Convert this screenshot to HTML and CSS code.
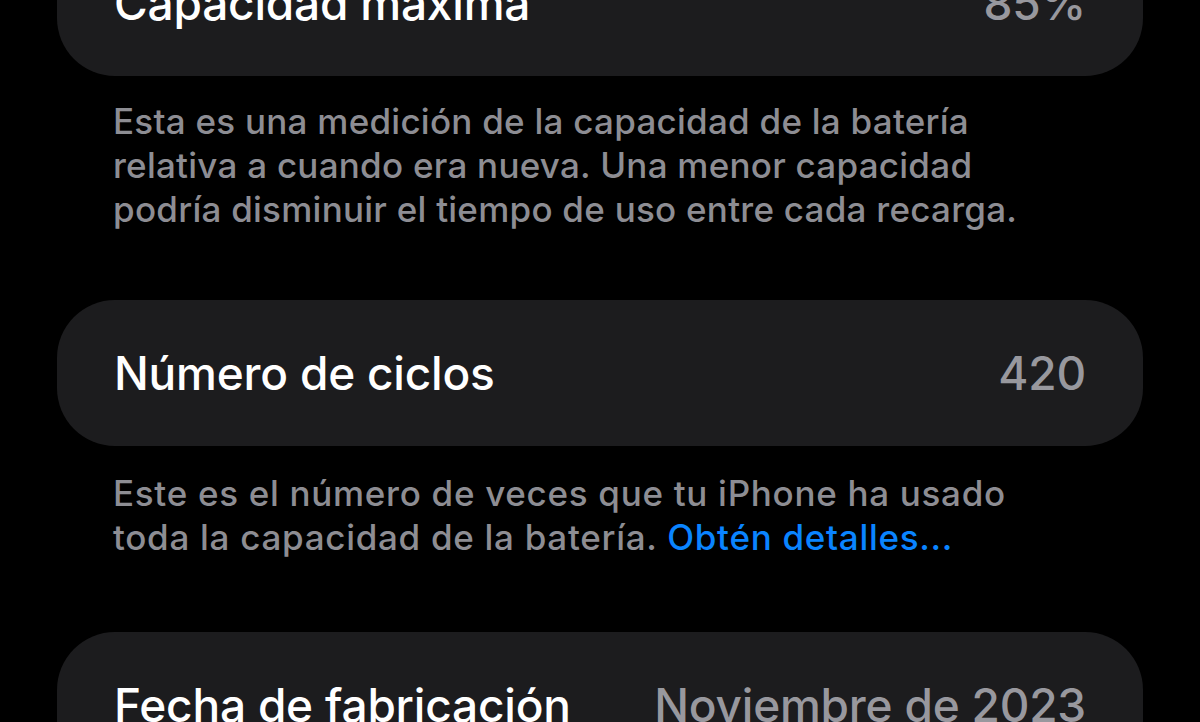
FILE: index.html
```html
<!DOCTYPE html>
<html lang="es">
<head>
<meta charset="utf-8">
<link rel="stylesheet" href="styles.css">
</head>
<body>
<main class="list">
  <section class="card">
    <span class="label">Capacidad máxima</span>
    <span class="value">85%</span>
  </section>
  <p class="note">Esta es una medición de la capacidad de la batería relativa a cuando era nueva. Una menor capacidad podría disminuir el tiempo de uso entre cada recarga.</p>
  <section class="card">
    <span class="label">Número de ciclos</span>
    <span class="value">420</span>
  </section>
  <p class="note note-link">Este es el número de veces que tu iPhone ha usado toda la capacidad de la batería. <a class="link" href="#">Obtén detalles...</a></p>
  <section class="card">
    <span class="label">Fecha de fabricación</span>
    <span class="value">Noviembre de 2023</span>
  </section>
</main>
</body>
</html>
```
FILE: styles.css
```css
html, body {
  margin: 0;
  padding: 0;
  background: #000;
  height: 100%;
  overflow: hidden;
}
body {
  font-family: Inter, "Noto Sans", "Liberation Sans", sans-serif;
  -webkit-font-smoothing: antialiased;
}
.list {
  display: flex;
  flex-direction: column;
  padding: 0 57px;
  margin-top: -70px;
}
.card {
  height: 146px;
  flex: none;
  background: #1c1c1e;
  border-radius: 58px;
  display: flex;
  align-items: center;
  justify-content: space-between;
  padding: 0 57px 0 57px;
  box-sizing: border-box;
}
.label {
  color: #fff;
  font-size: 46px;
  font-weight: 500;
  letter-spacing: -0.2px;
}
.value {
  color: #98989e;
  font-size: 46px;
  font-weight: 500;
  letter-spacing: -0.2px;
}
.note {
  margin: 23px 0 69px;
  padding: 0 95px 0 56px;
  color: #8d8d93;
  font-size: 35px;
  line-height: 44px;
  font-weight: 500;
  letter-spacing: 0.25px;
}
.note-link {
  margin: 25px 0 73px;
  padding-right: 80px;
  letter-spacing: 0.7px;
}
.link {
  color: #0a84ff;
  text-decoration: none;
}
```
